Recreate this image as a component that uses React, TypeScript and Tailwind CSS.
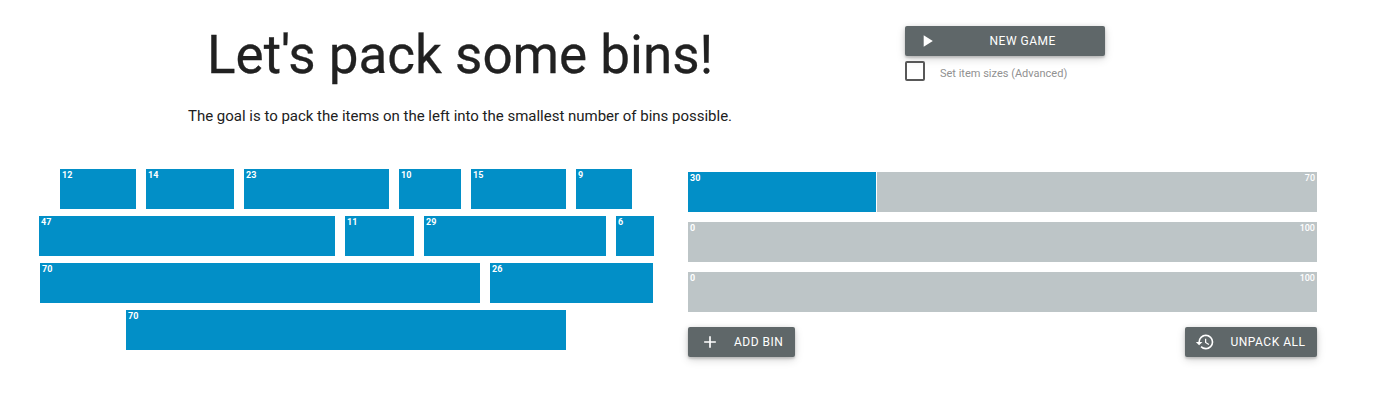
import type { ReactNode } from "react";
import { MdAdd, MdHistory, MdPlayArrow } from "react-icons/md";

const shadow =
  "shadow-[0_2px_2px_0_rgba(0,0,0,0.12),0_1px_5px_0_rgba(0,0,0,0.12),0_3px_10px_0_rgba(0,0,0,0.14)]";

const itemRows = [
  {
    className: "pl-[60px]",
    items: [
      { size: 12, width: 76 },
      { size: 14, width: 88 },
      { size: 23, width: 145 },
      { size: 10, width: 62 },
      { size: 15, width: 95 },
      { size: 9, width: 56 },
    ],
  },
  {
    className: "pl-[39px]",
    items: [
      { size: 47, width: 296 },
      { size: 11, width: 69 },
      { size: 29, width: 182 },
      { size: 6, width: 38 },
    ],
  },
  {
    className: "pl-10",
    items: [
      { size: 70, width: 440 },
      { size: 26, width: 163 },
    ],
  },
  { className: "pl-[126px]", items: [{ size: 70, width: 440 }] },
];

const bins = [
  { used: 30, free: 70 },
  { used: 0, free: 100 },
  { used: 0, free: 100 },
];

function Item({ size, width }: { size: number; width: number }) {
  return (
    <div
      className="h-10 shrink-0 bg-[#028fc7] pl-[2px] text-[9px] leading-3 font-bold tracking-[0.1px] text-white"
      style={{ width }}
    >
      {size}
    </div>
  );
}

function Button({ icon, className, children }: { icon: ReactNode; className: string; children: ReactNode }) {
  return (
    <button
      className={`flex h-[30px] items-center rounded-[2px] bg-[#5f6769] text-[12px] tracking-[0.5px] whitespace-nowrap text-white ${shadow} ${className}`}
    >
      {icon}
      {children}
    </button>
  );
}

export default function App() {
  return (
    <div className="h-[410px] w-[1378px] overflow-hidden bg-white font-['Roboto',sans-serif] text-[#212121]">
      <header className="flex h-[169px]">
        <div className="w-[905px] pt-[23px]">
          <h1 className="pl-[207px] text-[53px] leading-[64px] whitespace-nowrap [-webkit-text-stroke:0.3px_#212121]">
            Let's pack some bins!
          </h1>
          <p className="mt-[17px] pl-[188px] text-[15px] leading-6 tracking-[-0.01px] whitespace-nowrap">
            The goal is to pack the items on the left into the smallest number of bins possible.
          </p>
        </div>
        <div className="pt-[26px]">
          <Button icon={<MdPlayArrow size={20} />} className="w-[200px] pl-3">
            <span className="pl-[52.5px]">NEW GAME</span>
          </Button>
          <label className="mt-[5px] flex h-5 items-center">
            <span className="size-5 rounded-[2px] border-2 border-[#585858]" />
            <span className="pt-[5px] pl-[15px] text-[11px] leading-4 whitespace-nowrap text-[#919191]">
              Set item sizes (Advanced)
            </span>
          </label>
        </div>
      </header>
      <main className="flex">
        <section className="flex w-[688px] flex-col gap-[7px]">
          {itemRows.map((row, i) => (
            <div key={i} className={`flex gap-[10px] ${row.className}`}>
              {row.items.map((item) => (
                <Item key={item.size} size={item.size} width={item.width} />
              ))}
            </div>
          ))}
        </section>
        <section className="flex w-[629px] flex-col gap-[10px] pt-[3px]">
          {bins.map((bin, i) => (
            <div key={i} className="flex h-10 bg-[#bdc5c7]">
              {bin.used > 0 ? (
                <div className="border-r border-white">
                  <Item size={bin.used} width={188} />
                </div>
              ) : (
                <span className="pl-[2px] text-[9px] leading-3 font-bold text-white">0</span>
              )}
              <span className="ml-auto pr-[2px] text-[9px] leading-3 font-medium text-white">{bin.free}</span>
            </div>
          ))}
          <div className="flex justify-between pt-[5px]">
            <Button icon={<MdAdd size={20} />} className="w-[107px] pl-[11.5px]">
              <span className="pl-[14.5px]">ADD BIN</span>
            </Button>
            <Button icon={<MdHistory size={20} />} className="w-[132px] pl-[10px]">
              <span className="pl-[15.5px]">UNPACK ALL</span>
            </Button>
          </div>
        </section>
      </main>
    </div>
  );
}
